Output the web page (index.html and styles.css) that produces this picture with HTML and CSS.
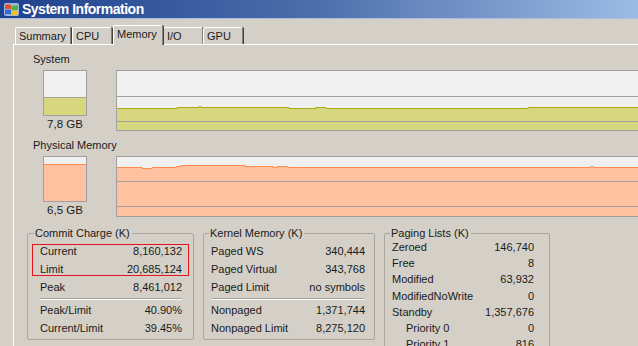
FILE: index.html
```html
<!DOCTYPE html>
<html lang="en">
<head>
  <meta charset="UTF-8" />
  <title>System Information</title>
  <link rel="stylesheet" href="styles.css">
</head>
<body>
  <div class="window">
    <div class="titlebar">
      <svg class="app-icon" width="17" height="17" viewBox="0 0 17 17">
        <rect x="1" y="2" width="15" height="13" rx="2" fill="#9fb8e0"/>
        <path d="M2 4 Q5 2.5 8 4 L8 8.5 Q5 7 2 8.5 Z" fill="#e8502a"/>
        <path d="M8.6 4.2 Q11.5 5.5 15 4 L15 8.5 Q11.5 10 8.6 8.7 Z" fill="#4fb43c"/>
        <path d="M2 9.2 Q5 7.7 8 9.2 L8 13.6 Q5 12.2 2 13.6 Z" fill="#2f6ad6"/>
        <path d="M8.6 9.4 Q11.5 10.7 15 9.2 L15 13.6 Q11.5 15 8.6 13.8 Z" fill="#f4c21c"/>
      </svg>
      <span class="title">System Information</span>
    </div>

    <div class="client">
      <ul class="tabs">
        <li class="tab tab-summary">Summary</li>
        <li class="tab tab-cpu">CPU</li>
        <li class="tab tab-memory active">Memory</li>
        <li class="tab tab-io">I/O</li>
        <li class="tab tab-gpu">GPU</li>
      </ul>

      <div class="panel">
        <div class="meter">
          <div class="meter-label">System</div>
          <div class="meter-row">
            <div class="gauge-col">
              <div class="gauge">
                <div class="gauge-fill commit" style="height: 18px"></div>
              </div>
              <div class="gauge-value">7,8 GB</div>
            </div>
            <div class="chart">
              <svg width="538" height="59" viewBox="0 0 538 59">
                <polygon class="fill-commit" points="0,37.5 60,37.5 60,36.5 82,36.5 82,35.5 84,35.5 84,36.5 172,36.5 172,37.5 199,37.5 199,36.5 209,36.5 209,37.5 411,37.5 411,36.5 538,36.5 538,59 0,59"/>
                <polyline class="line-commit" points="0,37.5 60,37.5 60,36.5 82,36.5 82,35.5 84,35.5 84,36.5 172,36.5 172,37.5 199,37.5 199,36.5 209,36.5 209,37.5 411,37.5 411,36.5 538,36.5"/>
                <line class="grid" x1="0" y1="25.5" x2="538" y2="25.5"/>
                <line class="grid" x1="0" y1="50.5" x2="538" y2="50.5"/>
              </svg>
            </div>
          </div>
        </div>

        <div class="meter">
          <div class="meter-label">Physical Memory</div>
          <div class="meter-row">
            <div class="gauge-col">
              <div class="gauge">
                <div class="gauge-fill phys" style="height: 37px"></div>
              </div>
              <div class="gauge-value">6,5 GB</div>
            </div>
            <div class="chart">
              <svg width="538" height="59" viewBox="0 0 538 59">
                <polygon class="fill-phys" points="0,10.5 25,10.5 25,11.5 35,11.5 35,10.5 59,10.5 59,9.5 64,9.5 64,8.5 128,8.5 128,9.5 156,9.5 156,10.5 160,10.5 160,9.5 171,9.5 171,10.5 538,10.5 538,59 0,59"/>
                <polyline class="line-phys" points="0,10.5 25,10.5 25,11.5 35,11.5 35,10.5 59,10.5 59,9.5 64,9.5 64,8.5 128,8.5 128,9.5 156,9.5 156,10.5 160,10.5 160,9.5 171,9.5 171,10.5 474,10.5 474,9.5 476,9.5 476,10.5 538,10.5"/>
                <line class="grid" x1="0" y1="24.5" x2="538" y2="24.5"/>
                <line class="grid" x1="0" y1="49.5" x2="538" y2="49.5"/>
              </svg>
            </div>
          </div>
        </div>

        <div class="groups">
          <fieldset class="group group-commit">
            <legend>Commit Charge (K)</legend>
            <div class="rows">
              <div class="highlight"></div>
              <div class="row"><span>Current</span><span>8,160,132</span></div>
              <div class="row"><span>Limit</span><span>20,685,124</span></div>
              <div class="row"><span>Peak</span><span>8,461,012</span></div>
              <div class="sep"></div>
              <div class="row"><span>Peak/Limit</span><span>40.90%</span></div>
              <div class="row"><span>Current/Limit</span><span>39.45%</span></div>
            </div>
          </fieldset>

          <fieldset class="group group-kernel">
            <legend>Kernel Memory (K)</legend>
            <div class="rows">
              <div class="row"><span>Paged WS</span><span>340,444</span></div>
              <div class="row"><span>Paged Virtual</span><span>343,768</span></div>
              <div class="row"><span>Paged Limit</span><span>no symbols</span></div>
              <div class="sep"></div>
              <div class="row"><span>Nonpaged</span><span>1,371,744</span></div>
              <div class="row"><span>Nonpaged Limit</span><span>8,275,120</span></div>
            </div>
          </fieldset>

          <fieldset class="group group-paging">
            <legend>Paging Lists (K)</legend>
            <div class="rows">
              <div class="row"><span>Zeroed</span><span>146,740</span></div>
              <div class="row"><span>Free</span><span>8</span></div>
              <div class="row"><span>Modified</span><span>63,932</span></div>
              <div class="row"><span>ModifiedNoWrite</span><span>0</span></div>
              <div class="row"><span>Standby</span><span>1,357,676</span></div>
              <div class="row sub"><span>Priority 0</span><span>0</span></div>
              <div class="row sub"><span>Priority 1</span><span>816</span></div>
            </div>
          </fieldset>
        </div>
      </div>
    </div>
  </div>
</body>
</html>
```

FILE: styles.css
```css
* {
  margin: 0;
  padding: 0;
  box-sizing: border-box;
}

body {
  font-family: 'Liberation Sans', Arial, sans-serif;
  font-size: 11px;
  line-height: 13px;
  color: #1a1a1a;
  background: #d4d0c8;
}

.window {
  width: 638px;
  height: 346px;
  overflow: hidden;
  background: #d4d0c8;
}

/* title bar */
.titlebar {
  height: 19px;
  display: flex;
  align-items: center;
  padding-left: 3px;
  background: linear-gradient(to right, #1f4290 0%, #4b6ba9 47%, #9cbce6 100%);
  border-bottom: 1px solid #a9bde0;
}

.app-icon {
  flex: none;
  margin-right: 2px;
}

.title {
  color: #fff;
  font-weight: bold;
  font-size: 14px;
  letter-spacing: -0.5px;
  line-height: 18px;
}

/* tabs */
.client {
  padding: 6px 0 0 13px;
}

.tabs {
  list-style: none;
  display: flex;
  align-items: flex-end;
  height: 19px;
  margin-left: 2px;
  position: relative;
  z-index: 1;
}

.tab {
  height: 17px;
  padding: 2px 0 0 3px;
  border: 1px solid #fff;
  border-bottom: none;
  border-right: 1px solid #808080;
  border-radius: 2px 2px 0 0;
  box-shadow: 1px 0 0 #404040;
  background: #d4d0c8;
}

.tab-summary { width: 56px; margin-right: 1px; }
.tab-cpu { width: 40px; margin-right: 1px; }
.tab-memory { width: 50px; }
.tab-io { width: 40px; }
.tab-gpu { width: 40px; }

.tab.active {
  height: 20px;
  margin-bottom: -1px;
  padding-top: 2px;
  position: relative;
}

/* main panel */
.panel {
  border-top: 1px solid #fff;
  border-left: 1px solid #fff;
  height: 400px;
  padding-top: 8px;
}

.meter + .meter {
  margin-top: 8px;
}

.meter-label {
  padding-left: 19px;
}

.meter-row {
  display: flex;
  align-items: flex-start;
  gap: 29px;
  margin-top: 4px;
  padding-left: 29px;
}

.gauge-col {
  width: 44px;
  flex: none;
}

.gauge {
  height: 46px;
  border: 1px solid #a0a0a0;
  background: #f0f0f0;
  display: flex;
  flex-direction: column;
  justify-content: flex-end;
}

.gauge-fill.commit {
  background: #d6d77f;
  border-top: 1px solid #a8a890;
}

.gauge-fill.phys {
  background: #ffc1a0;
  border-top: 1px solid #ff8a4c;
}

.gauge-value {
  margin-top: 2px;
  text-align: center;
  font-size: 11.5px;
}

.chart {
  flex: none;
  width: 540px;
  height: 61px;
  border: 1px solid #a0a0a0;
  background: #f0f0f0;
}

.chart svg {
  display: block;
}

.fill-commit { fill: #d6d77f; }
.line-commit { fill: none; stroke: #aaaa10; stroke-width: 1; }
.fill-phys { fill: #ffc1a0; }
.line-phys { fill: none; stroke: #ff8a4c; stroke-width: 1; }
.grid { stroke: #a4a09c; stroke-width: 1; }

/* group boxes */
.groups {
  display: flex;
  gap: 9px;
  margin-top: 10px;
  padding-left: 13px;
  align-items: flex-start;
}

.group {
  border: 1px solid #aaa69e;
  border-radius: 2px;
  min-width: 0;
}

.group legend {
  padding: 0 2px 0 1px;
  margin-left: -2px;
  line-height: 13px;
}

.group-commit {
  width: 167px;
  padding: 2px 11px 2px 12px;
}

.group-commit legend {
  margin-left: -6px;
}

.group-kernel {
  width: 172px;
  padding: 2px 9px 2px 7px;
}

.group-paging {
  width: 166px;
  height: 140px;
  padding: 0 15px 0 7px;
}

.rows {
  position: relative;
}

.row {
  display: flex;
  justify-content: space-between;
  line-height: 18px;
  white-space: nowrap;
}

.group-paging .rows {
  margin-top: -1px;
}

.group-paging .row {
  line-height: 16.2px;
}

.row.sub {
  padding-left: 14px;
}

.sep {
  border-top: 1px solid #a0a0a0;
  border-bottom: 1px solid #fff;
  margin: 2px 0 1px;
}

/* red annotation round Current / Limit */
.highlight {
  position: absolute;
  left: -8px;
  top: 2px;
  width: 157px;
  height: 32px;
  border: 1px solid #e4141c;
}
```
